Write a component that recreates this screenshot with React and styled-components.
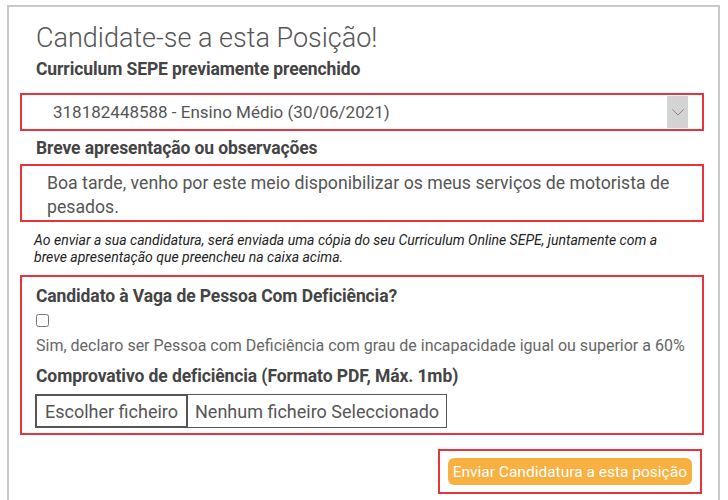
import React from 'react';
import styled, { createGlobalStyle } from 'styled-components';

const GlobalStyle = createGlobalStyle`
  body {
    margin: 0;
    background: #fff;
    font-family: Roboto, "Liberation Sans", sans-serif;
    color: #555;
  }
`;

const Card = styled.section`
  box-sizing: border-box;
  margin: 5px 0 0 7px;
  width: 713px;
  min-height: 520px;
  border: 2px solid #c9c9c9;
  border-bottom: none;
  padding: 14px 14px 0 11px;
`;

const Title = styled.h2`
  margin: 0 0 4px 16px;
  font-size: 27px;
  font-weight: 300;
  color: #555;
  line-height: 34px;
`;

const Label = styled.label`
  display: block;
  margin: ${(p) => p.top || 0}px 0 0 ${(p) => p.left || 16}px;
  font-size: 17.5px;
  font-weight: 700;
  color: #444;
  line-height: 20px;
  letter-spacing: -0.1px;
`;

const Outlined = styled.div`
  box-sizing: border-box;
  border: 2px solid #e8323c;
`;

const Select = styled(Outlined)`
  display: flex;
  align-items: center;
  justify-content: space-between;
  height: 38px;
  padding: 0 14px 0 31px;
  margin-top: 14px;
  font-size: 17px;
  color: #555;
`;

const Arrow = styled.div`
  width: 21px;
  height: 32px;
  background: #d3d3d3;
  display: flex;
  align-items: center;
  justify-content: center;
`;

const TextArea = styled(Outlined)`
  margin-top: 6px;
  height: 58px;
  padding: 5px 26px 0 25px;
  font-size: 17.7px;
  line-height: 24px;
  color: #555;
`;

const Note = styled.p`
  margin: 10px 0 0 14px;
  max-width: 655px;
  font-size: 14px;
  font-style: italic;
  line-height: 17px;
  color: #222;
`;

const PcdBox = styled(Outlined)`
  margin-top: 9px;
  height: 160px;
  padding: 9px 0 0 0;
`;

const Check = styled.input`
  display: block;
  margin: 8px 0 0 14px;
  width: 13px;
  height: 13px;
`;

const Hint = styled.p`
  margin: 9px 0 0 14px;
  font-size: 16px;
  color: #666;
  line-height: 20px;
`;

const FileRow = styled.div`
  display: flex;
  margin: 8px 0 0 13px;
  font-size: 18px;
  color: #555;
`;

const FileButton = styled.span`
  box-sizing: border-box;
  height: 34px;
  padding: 0 8px;
  border: 2px solid #555;
  display: flex;
  align-items: center;
`;

const FileName = styled.span`
  box-sizing: border-box;
  height: 34px;
  padding: 0 7px;
  border: 1px solid #555;
  border-left: none;
  display: flex;
  align-items: center;
`;

const Actions = styled.div`
  display: flex;
  justify-content: flex-end;
  margin: 14px 2px 0 0;
`;

const SubmitFrame = styled(Outlined)`
  padding: 7px 8px;
`;

const Submit = styled.button`
  border: none;
  background: #f8b041;
  color: #fff;
  font-family: inherit;
  font-size: 15.5px;
  height: 27px;
  padding: 0 5px;
  border-radius: 6px;
  display: block;
`;

export default function App() {
  return (
    <>
      <GlobalStyle />
      <Card>
        <Title>Candidate-se a esta Posição!</Title>
        <Label>Curriculum SEPE previamente preenchido</Label>
        <Select>
          <span>318182448588 - Ensino Médio (30/06/2021)</span>
          <Arrow>
            <svg width="12" height="7" viewBox="0 0 12 7" fill="none" stroke="#888" strokeWidth="1">
              <path d="M0.5 0.5 L6 6 L11.5 0.5" />
            </svg>
          </Arrow>
        </Select>
        <Label top={7}>Breve apresentação ou observações</Label>
        <TextArea>
          Boa tarde, venho por este meio disponibilizar os meus serviços de motorista de pesados.
        </TextArea>
        <Note>
          Ao enviar a sua candidatura, será enviada uma cópia do seu Curriculum Online SEPE, juntamente com a
          breve apresentação que preencheu na caixa acima.
        </Note>
        <PcdBox>
          <Label left={14}>Candidato à Vaga de Pessoa Com Deficiência?</Label>
          <Check type="checkbox" />
          <Hint>Sim, declaro ser Pessoa com Deficiência com grau de incapacidade igual ou superior a 60%</Hint>
          <Label left={14} top={10}>Comprovativo de deficiência (Formato PDF, Máx. 1mb)</Label>
          <FileRow>
            <FileButton>Escolher ficheiro</FileButton>
            <FileName>Nenhum ficheiro Seleccionado</FileName>
          </FileRow>
        </PcdBox>
        <Actions>
          <SubmitFrame>
            <Submit>Enviar Candidatura a esta posição</Submit>
          </SubmitFrame>
        </Actions>
      </Card>
    </>
  );
}
